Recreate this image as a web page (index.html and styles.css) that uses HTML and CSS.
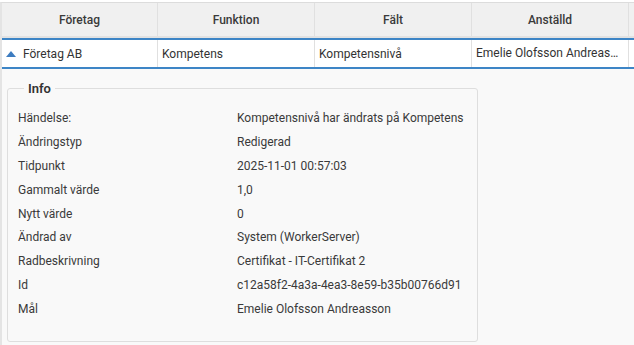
FILE: index.html
```html
<!DOCTYPE html>
<html lang="sv">
  <head>
    <meta charset="UTF-8" />
    <title>Historik</title>
    <link rel="stylesheet" href="styles.css">
  </head>
  <body>
    <div class="grid">
      <div class="grid-head">
        <div class="th">Företag</div>
        <div class="th">Funktion</div>
        <div class="th">Fält</div>
        <div class="th">Anställd</div>
        <div class="th gutter"></div>
      </div>
      <div class="grid-row">
        <div class="td"><span class="caret"></span>Företag AB</div>
        <div class="td">Kompetens</div>
        <div class="td">Kompetensnivå</div>
        <div class="td ellipsis">Emelie Olofsson Andreasson</div>
        <div class="td gutter"></div>
      </div>
      <div class="detail">
        <fieldset class="info">
          <legend>Info</legend>
          <dl class="props">
            <dt>Händelse:</dt><dd>Kompetensnivå har ändrats på Kompetens</dd>
            <dt>Ändringstyp</dt><dd>Redigerad</dd>
            <dt>Tidpunkt</dt><dd>2025-11-01 00:57:03</dd>
            <dt>Gammalt värde</dt><dd>1,0</dd>
            <dt>Nytt värde</dt><dd>0</dd>
            <dt>Ändrad av</dt><dd>System (WorkerServer)</dd>
            <dt>Radbeskrivning</dt><dd>Certifikat - IT-Certifikat 2</dd>
            <dt>Id</dt><dd>c12a58f2-4a3a-4ea3-8e59-b35b00766d91</dd>
            <dt>Mål</dt><dd>Emelie Olofsson Andreasson</dd>
          </dl>
        </fieldset>
      </div>
    </div>
  </body>
</html>
```

FILE: styles.css
```css
* {
  margin: 0;
  padding: 0;
  box-sizing: border-box;
}
body {
  font-family: Roboto, "Liberation Sans", sans-serif;
  font-size: 12px;
  color: #333;
  background: #fff;
  padding-top: 2px;
}
.grid {
  border-top: 1px solid #dcdcdc;
  border-left: 2px solid #e4e4e4;
  height: 343px;
  display: flex;
  flex-direction: column;
}
.grid-head,
.grid-row {
  display: grid;
  grid-template-columns: 156px 157px 157px 157px 1fr;
}
.grid-head {
  height: 35px;
  background: #f0f0f0;
  border-bottom: 2px solid #e2e2e2;
}
.th {
  display: flex;
  align-items: center;
  justify-content: center;
  font-weight: 500;
  color: #3a3a3a;
  border-right: 1px solid #e0e0e0;
}
.th.gutter,
.td.gutter {
  border-right: none;
}
.grid-row {
  height: 31px;
  border-top: 2px solid #3d85c6;
  border-bottom: 2px solid #3d85c6;
  background: #fff;
}
.td {
  display: flex;
  align-items: center;
  padding: 0 4px;
  border-right: 1px solid #e0e0e0;
  white-space: nowrap;
  overflow: hidden;
  min-width: 0;
  color: #333;
}
.td.ellipsis {
  display: block;
  line-height: 27px;
  text-overflow: ellipsis;
}
.caret {
  width: 0;
  height: 0;
  margin: 0 7px 0 0;
  border-left: 5px solid transparent;
  border-right: 5px solid transparent;
  border-bottom: 6px solid #3d7cc0;
}
.detail {
  flex: 1;
  background: #f9f9f9;
  padding: 12px 152px 0 5px;
}
.info {
  width: 471px;
  height: 261px;
  border: 1px solid #dedede;
  border-radius: 3px;
  padding: 10px 10px 0;
}
.info legend {
  font-size: 13px;
  font-weight: 600;
  color: #333;
  padding: 0 4px;
  margin-left: 6px;
}
.props {
  display: grid;
  grid-template-columns: 219px 1fr;
  grid-auto-rows: 23.9px;
  align-items: center;
}
.props dt,
.props dd {
  color: #3a3a3a;
  white-space: nowrap;
}
```
